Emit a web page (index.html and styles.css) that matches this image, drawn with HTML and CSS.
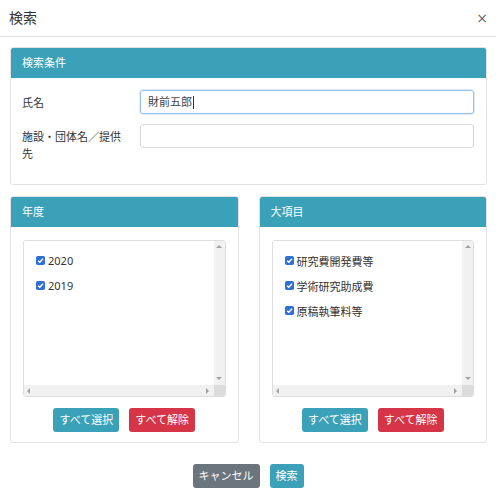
FILE: index.html
```html
<!DOCTYPE html>
<html lang="ja">
<head>
<meta charset="utf-8">
<title>検索</title>
<link rel="stylesheet" href="styles.css">
</head>
<body>
<div class="modal">
  <div class="modal-header">
    <h5 class="modal-title">検索</h5>
    <span class="close">×</span>
  </div>
  <div class="modal-body">
    <div class="card">
      <div class="card-header">検索条件</div>
      <div class="card-body form-grid">
        <label class="lbl">氏名</label>
        <div class="form-control focus">財前五郎<span class="caret"></span></div>
        <label class="lbl">施設・団体名／提供先</label>
        <div class="form-control"></div>
      </div>
    </div>
    <div class="cols">
      <div class="card">
        <div class="card-header">年度</div>
        <div class="card-body list-body">
          <div class="listbox">
            <div class="list-content">
              <div class="item"><svg class="cb" viewBox="0 0 10 10"><rect width="10" height="10" rx="2" fill="#2f6fd6"/><path d="M2.3 5.2 L4.2 7 L7.8 3" fill="none" stroke="#fff" stroke-width="1.6"/></svg><span>2020</span></div>
              <div class="item"><svg class="cb" viewBox="0 0 10 10"><rect width="10" height="10" rx="2" fill="#2f6fd6"/><path d="M2.3 5.2 L4.2 7 L7.8 3" fill="none" stroke="#fff" stroke-width="1.6"/></svg><span>2019</span></div>
            </div>
            <div class="vscroll"><span class="tri up"></span><span class="tri down"></span></div>
            <div class="hscroll"><span class="tri left"></span><span class="tri right"></span></div>
            <div class="corner"></div>
          </div>
          <div class="btn-row">
            <button class="btn btn-info">すべて選択</button>
            <button class="btn btn-danger">すべて解除</button>
          </div>
        </div>
      </div>
      <div class="card">
        <div class="card-header">大項目</div>
        <div class="card-body list-body">
          <div class="listbox">
            <div class="list-content">
              <div class="item"><svg class="cb" viewBox="0 0 10 10"><rect width="10" height="10" rx="2" fill="#2f6fd6"/><path d="M2.3 5.2 L4.2 7 L7.8 3" fill="none" stroke="#fff" stroke-width="1.6"/></svg><span>研究費開発費等</span></div>
              <div class="item"><svg class="cb" viewBox="0 0 10 10"><rect width="10" height="10" rx="2" fill="#2f6fd6"/><path d="M2.3 5.2 L4.2 7 L7.8 3" fill="none" stroke="#fff" stroke-width="1.6"/></svg><span>学術研究助成費</span></div>
              <div class="item"><svg class="cb" viewBox="0 0 10 10"><rect width="10" height="10" rx="2" fill="#2f6fd6"/><path d="M2.3 5.2 L4.2 7 L7.8 3" fill="none" stroke="#fff" stroke-width="1.6"/></svg><span>原稿執筆料等</span></div>
            </div>
            <div class="vscroll"><span class="tri up"></span><span class="tri down"></span></div>
            <div class="hscroll"><span class="tri left"></span><span class="tri right"></span></div>
            <div class="corner"></div>
          </div>
          <div class="btn-row">
            <button class="btn btn-info">すべて選択</button>
            <button class="btn btn-danger">すべて解除</button>
          </div>
        </div>
      </div>
    </div>
  </div>
  <div class="modal-footer">
    <button class="btn btn-secondary">キャンセル</button>
    <button class="btn btn-info">検索</button>
  </div>
</div>
</body>
</html>
```
FILE: styles.css
```css
* { box-sizing: border-box; }
html, body {
  margin: 0;
  padding: 0;
  background: #fff;
  font-family: "Noto Sans", "Noto Sans CJK JP", sans-serif;
  color: #333;
}
.modal { width: 496px; }
.modal-header {
  height: 37px;
  border-bottom: 1px solid #e3e6e9;
  display: flex;
  align-items: center;
  justify-content: space-between;
  padding: 0 8px 0 9px;
}
.modal-title {
  margin: 0;
  font-size: 14px;
  font-weight: normal;
  line-height: 20px;
  color: #333;
}
.close {
  font-family: "DejaVu Sans", sans-serif;
  font-size: 14px;
  color: #666;
  line-height: 20px;
}
.modal-body { padding: 10px 9px 0 10px; }
.card {
  border: 1px solid #e2e2e2;
  border-radius: 3px;
  background: #fff;
}
.card-header {
  height: 30px;
  line-height: 30px;
  background: #3aa1b8;
  color: #fff;
  font-size: 11px;
  padding: 0 11px;
  border-radius: 2px 2px 0 0;
}
.form-grid {
  display: grid;
  grid-template-columns: 118px 1fr;
  row-gap: 10px;
  align-items: start;
  padding: 12px 12px 22px 11px;
}
.lbl {
  font-size: 11px;
  line-height: 17px;
  padding: 4px 12px 0 0;
  color: #333;
}
.form-control {
  height: 24px;
  border: 1px solid #d5d9dd;
  border-radius: 3px;
  font-size: 11px;
  line-height: 22px;
  padding: 0 7px;
  color: #444;
  display: flex;
  align-items: center;
}
.form-control.focus {
  border-color: #94c3f0;
  box-shadow: 0 0 0 1px rgba(60, 140, 230, 0.18);
}
.caret {
  display: inline-block;
  width: 1px;
  height: 13px;
  background: #333;
  margin-left: 1px;
}
.cols {
  display: grid;
  grid-template-columns: 1fr 1fr;
  column-gap: 20px;
  margin-top: 11px;
}
.list-body { padding: 13px 12px 10px 12px; }
.listbox {
  height: 157px;
  border: 1px solid #dedede;
  border-radius: 3px;
  display: grid;
  grid-template-columns: 1fr 11px;
  grid-template-rows: 1fr 11px;
  overflow: hidden;
}
.list-content { padding: 7px 12px; }
.item {
  height: 25px;
  display: flex;
  align-items: center;
  gap: 3px;
  font-size: 11px;
  color: #333;
}
.cb { width: 9px; height: 9px; flex: none; }
.vscroll {
  background: #f1f1f1;
  display: flex;
  flex-direction: column;
  justify-content: space-between;
  align-items: center;
  padding: 4px 0 5px;
}
.hscroll {
  background: #f1f1f1;
  display: flex;
  justify-content: space-between;
  align-items: center;
  padding: 0 5px 0 3px;
}
.corner { background: #dcdcdc; }
.tri { width: 0; height: 0; display: block; }
.tri.up { border-left: 3px solid transparent; border-right: 3px solid transparent; border-bottom: 3px solid #a3a3a3; }
.tri.down { border-left: 3px solid transparent; border-right: 3px solid transparent; border-top: 3px solid #a3a3a3; }
.tri.left { border-top: 3px solid transparent; border-bottom: 3px solid transparent; border-right: 3px solid #a3a3a3; }
.tri.right { border-top: 3px solid transparent; border-bottom: 3px solid transparent; border-left: 3px solid #a3a3a3; }
.btn-row {
  display: flex;
  justify-content: center;
  gap: 10px;
  margin-top: 11px;
}
.btn {
  height: 24px;
  border: none;
  border-radius: 3px;
  padding: 0 6px;
  font-family: "Noto Sans", "Noto Sans CJK JP", sans-serif;
  font-size: 11px;
  line-height: 24px;
  color: #fff;
}
.btn-info { background: #3aa1b8; }
.btn-danger { background: #d63447; }
.btn-secondary { background: #6c757d; }
.modal-footer {
  display: flex;
  justify-content: center;
  gap: 10px;
  padding: 21px 0 12px;
}
```
